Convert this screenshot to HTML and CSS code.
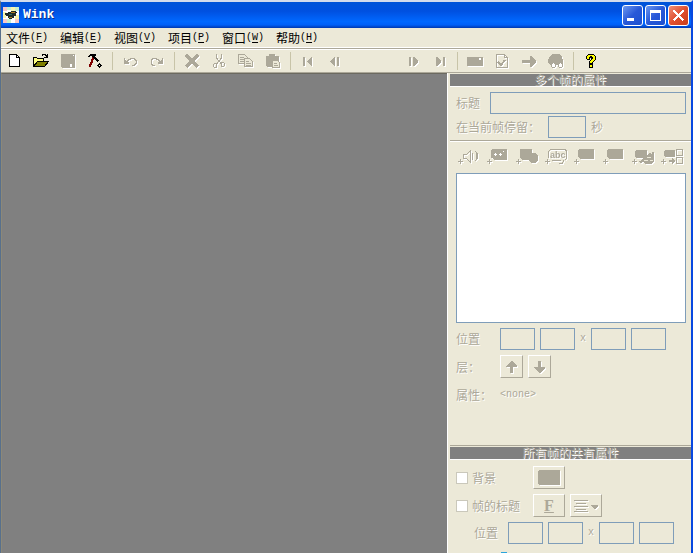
FILE: index.html
```html
<!DOCTYPE html>
<html lang="zh-CN">
<head>
<meta charset="utf-8">
<title>Wink</title>
<link rel="stylesheet" href="styles.css">
</head>
<body>
<div class="window">
  <header class="titlebar">
    <svg class="app-icon" viewBox="0 0 16 16"><path fill="#fff" d="M0 0h16v16H0z"/><path fill="#f8c8c8" d="M0 0h4v4H0zM12 12h4v4h-4zM0 12h4v4H0z"/><path fill="#c8f0d0" d="M4 0h4v3H4zM12 0h4v4h-4zM4 12h4v4H4z"/><path fill="#f8f4b0" d="M8 0h4v4H8zM0 5h3v6H0zM12 8h4v4h-4z"/><path fill="#222c28" d="M2 6h3V5h3V4h5v1h1v1h-1v3h-2v2H9v1H6v-1H5V9H3V8H2z"/><path fill="#b08020" d="M8 5h4v1H8zM6 10h3v1H6z"/><path fill="#307060" d="M6 7h3v1H6z"/></svg>
    <h1 class="app-name">Wink</h1>
    <button class="caption" aria-label="最小化"><svg viewBox="0 0 21 21"><path fill="#fff" d="M5 13h7v3H5z"/></svg></button>
    <button class="caption" aria-label="最大化"><svg viewBox="0 0 21 21"><path fill="#fff" fill-rule="evenodd" d="M5 5h11v11H5zM6 8v7h9V8z"/></svg></button>
    <button class="caption caption-close" aria-label="关闭"><svg viewBox="0 0 21 21"><path fill="none" stroke="#fff" stroke-width="2.4" d="M5.500 5.500l10 10M15.500 5.500l-10 10"/></svg></button>
  </header>

  <nav class="menubar">
    <button>文件<span>(<u>F</u>)</span></button>
    <button>编辑<span>(<u>E</u>)</span></button>
    <button>视图<span>(<u>V</u>)</span></button>
    <button>项目<span>(<u>P</u>)</span></button>
    <button>窗口<span>(<u>W</u>)</span></button>
    <button>帮助<span>(<u>H</u>)</span></button>
  </nav>

  <div class="toolbar">
    <button aria-label="新建"><svg viewBox="0 0 16 16"><path fill="#fff" stroke="#000" d="M3.500 1.500h7l3 3v9h-10z"/><path fill="none" stroke="#000" d="M10.500 1.500v3h3"/></svg></button>
    <button aria-label="打开"><svg viewBox="0 0 16 16"><path fill="#ffff80" stroke="#000" d="M.5 13.500v-9h3l1 1h6v3"/><path fill="#808000" stroke="#000" d="M.5 13.500l4-5h11l-4 5z"/><path fill="none" stroke="#000" d="M9 2.500l1-1h2l2 2M14.500 1v3.500H11"/></svg></button>
    <button disabled aria-label="保存"><svg viewBox="0 0 16 16"><path fill="#aca899" d="M1 1h14v14H2l-1-1z"/><path fill="#fff" d="M13 2h1v1h-1zM10 11h2v3h-2z"/></svg></button>
    <button aria-label="渲染"><svg viewBox="0 0 16 16"><path fill="none" stroke="#800000" stroke-width="2.200" d="M6.500 4.500L2.500 14"/><path fill="none" stroke="#000" stroke-width="1.600" d="M1.500 4l2-2.200h5M6 3l5.500 5.500"/><path fill="#000" d="M12 10h1v1h1v1h1v1h-1v1h-1v1h-1v-1h-1v-1h-1v-1h1v-1h1z"/><path fill="#fff" d="M12 12h1v1h-1z"/></svg></button>
    <hr>
    <button disabled aria-label="撤消"><svg viewBox="0 0 16 16"><path fill="#aca899" d="M2 5h1v2h1v1h1v1h2v2H2z"/><path fill="none" stroke="#aca899" d="M5 8.500l2-2h1l1-1h3l2 2v3l-2 2h-2"/></svg></button>
    <button disabled aria-label="重做"><svg viewBox="0 0 16 16"><path fill="#aca899" d="M14 5h-1v2h-1v1h-1v1H9v2h5z"/><path fill="none" stroke="#aca899" d="M11 8.500l-2-2H8l-1-1H4l-2 2v3l2 2h2"/></svg></button>
    <hr>
    <button disabled aria-label="删除"><svg viewBox="0 0 16 16"><path fill="none" stroke="#aca899" stroke-width="3" d="M2 2l12 12M14 2L2 14"/></svg></button>
    <button disabled aria-label="剪切"><svg viewBox="0 0 16 16"><g fill="none" stroke="#aca899"><path d="M5.500 1v4l5 6M10.500 1v4l-5 6"/><path d="M3.500 10.500h2v4h-2l-1-1v-2zM10.500 9.500h2l1 1v2l-1 1h-2z"/></g></svg></button>
    <button disabled aria-label="复制"><svg viewBox="0 0 16 16"><g fill="#ece9d8" stroke="#aca899"><path d="M.5 1.500h6l3 3v6h-9z"/><path d="M2 4.500h4M2 6.500h5M2 8.500h5"/><path d="M6.500 5.500h5l3 3v5h-8z"/><path d="M8 8.500h3M8 10.500h5M8 12h5"/></g></svg></button>
    <button disabled aria-label="粘贴"><svg viewBox="0 0 16 16"><path fill="#aca899" d="M1 3h3V1h6v2h4v5h-5v6H2l-1-1z"/><path fill="#ece9d8" stroke="#aca899" d="M7.500 7.500h5l2 2v5h-7z"/><path stroke="#aca899" d="M9 10.500h3M9 12.500h4"/></svg></button>
    <hr>
    <button disabled aria-label="首帧"><svg viewBox="0 0 16 16"><path fill="#aca899" d="M3 4h2v9H3zM12 4v9h-1L7 9V8l4-4z"/></svg></button>
    <button disabled aria-label="上一帧"><svg viewBox="0 0 16 16"><path fill="#aca899" d="M8 4v9H7L3 9V8l4-4zM10 4h2v9h-2z"/></svg></button>
    <span class="toolbar-gap"></span>
    <button disabled aria-label="下一帧"><svg viewBox="0 0 16 16"><path fill="#aca899" d="M4 4h2v9H4zM8 4h1l4 4v1l-4 4H8z"/></svg></button>
    <button disabled aria-label="末帧"><svg viewBox="0 0 16 16"><path fill="#aca899" d="M4 4h1l4 4v1l-4 4H4zM11 4h2v9h-2z"/></svg></button>
    <hr>
    <button disabled aria-label="帧属性"><svg viewBox="0 0 16 16"><path fill="#aca899" d="M0 4h16v9H0z"/><path fill="#fff" d="M12 5h2v2h-2z"/></svg></button>
    <button disabled aria-label="检查"><svg viewBox="0 0 16 16"><path fill="none" stroke="#aca899" d="M2.500 1.500h8l3 3v10h-11zM10.500 1.500v3h3"/><path fill="none" stroke="#aca899" stroke-width="2" d="M4 9l3 3 4-5"/></svg></button>
    <button disabled aria-label="转到"><svg viewBox="0 0 16 16"><path fill="#aca899" d="M1 7h8V3h1l5 5v1l-5 5H9v-4H1z"/></svg></button>
    <button disabled aria-label="浏览"><svg viewBox="0 0 16 16"><path fill="#aca899" d="M5 1h6l3 3 1 3v3l-2 2H2L0 9V7l2-4z"/><path fill="#fff" stroke="#aca899" d="M5.500 9.500h1l1 2v2l-1 1h-2l-1-1v-2zM11.500 9.500h1l2 2v2l-1 1h-2l-1-1v-2z"/></svg></button>
    <hr>
    <button aria-label="帮助"><svg viewBox="0 0 16 16"><path fill="#000" d="M5 1h6v1h1v1h1v4h-1v1h-1v1h-1v2H6V8h1V7h1V5H7v2H4V6H3V3h1V2h1zM6 11h4v4H6z"/><path fill="#ff0" d="M5 2h6v1h1v4h-1v1h-1v1H9v1H7V8h1V7h1V6h1V4H9V3H7v1H6v2H4V3h1zM7 12h2v2H7z"/></svg></button>
  </div>

  <div class="body">
    <main class="workspace"></main>
    <aside class="panel">
      <h2 class="panel-head"><span>多个帧的属性</span></h2>
      <section class="frame-fields">
        <div class="row">
          <label for="title">标题</label>
          <input class="grow" id="title" type="text" disabled>
        </div>
        <div class="row">
          <label for="stay">在当前帧停留：</label>
          <input class="stay" id="stay" type="text" disabled>
          <span>秒</span>
        </div>
      </section>
      <section class="objects">
        <div class="object-tools">
          <button disabled aria-label="添加声音"><svg viewBox="0 0 24 18"><path class="p" d="M0 13h2v-2h1v2h2v1H3v2H2v-2H0z"/><path class="l" d="M5.500 6.500h3l4-4v12l-4-4h-3zM14.500 5v7M17.500 3l1 2v6l-1 2M19.500 5v6"/></svg></button>
          <button disabled aria-label="添加标注"><svg viewBox="0 0 24 18"><path class="p" d="M0 13h2v-2h1v2h2v1H3v2H2v-2H0zM5 1h14l1 1v9l-1 1H7l-2-2H4V2z"/><path fill="#fff" d="M8 5h1v1h1v1H9v1H8V7H7V6h1zM13 5h1v1h1v1h-1v1h-1V7h-1V6h1zM16 3h1v1h-1z"/></svg></button>
          <button disabled aria-label="添加形状"><svg viewBox="0 0 24 18"><path class="p" d="M0 13h2v-2h1v2h2v1H3v2H2v-2H0zM4 1h12v4h3l3 3v4l-3 3h-4l-3-3H6l-2-2z"/></svg></button>
          <button disabled aria-label="添加文本"><svg viewBox="0 0 24 18"><path class="p" d="M0 13h2v-2h1v2h2v1H3v2H2v-2H0z"/><path class="l" d="M3.500 10V3.500l2-2h15l1 2v7l-2 2M7 12.500h9M14 15.500h3l2-3"/><text x="5" y="10">abc</text></svg></button>
          <button disabled aria-label="添加上一帧按钮"><svg viewBox="0 0 24 18"><path class="p" d="M0 13h2v-2h1v2h2v1H3v2H2v-2H0zM5 1h14l1 1v8l-1 1H6l-2-2V2z"/></svg></button>
          <button disabled aria-label="添加下一帧按钮"><svg viewBox="0 0 24 18"><path class="p" d="M0 13h2v-2h1v2h2v1H3v2H2v-2H0zM5 1h14l1 1v8l-1 1H6l-2-2V2z"/></svg></button>
          <button disabled aria-label="添加网址按钮"><svg viewBox="0 0 24 18"><path class="p" d="M0 13h2v-2h1v2h2v1H3v2H2v-2H0zM4 2h10l1 1v5l-2 2H4L3 8V3zM7 13l3-1 3-4 4-2V5h2v1h1V4h2v9l-3 3h-6l-2-2-3 1H8z"/><path fill="#ece9d8" d="M15 9h4v1h-4zM12 12h4v1h-4zM18 12h3v1h-3z"/></svg></button>
          <button disabled aria-label="添加跳转按钮"><svg viewBox="0 0 24 18"><path class="p" d="M0 13h2v-2h1v2h2v1H3v2H2v-2H0zM4 2h9l1 1v5l-1 1H4L3 8V3zM8 12h3v-2l3 3-3 3v-2H8z"/><path class="l" d="M15.500 1.500h6v6h-6zM15.500 9.500h6v6h-6z"/></svg></button>
        </div>
        <div class="list" role="listbox" aria-label="对象"></div>
        <div class="row">
          <span class="label">位置</span>
          <input type="text" aria-label="左" disabled>
          <input type="text" aria-label="上" disabled>
          <span class="times">x</span>
          <input type="text" aria-label="宽" disabled>
          <input type="text" aria-label="高" disabled>
        </div>
        <div class="row tall">
          <span class="label">层：</span>
          <button class="push" disabled aria-label="上移"><svg viewBox="0 0 16 16"><path class="p" d="M7 2h1l5 5v1H9v6H6V8H2V7z"/></svg></button>
          <button class="push" disabled aria-label="下移"><svg viewBox="0 0 16 16"><path class="p" d="M6 2h3v6h4v1l-5 5H7L2 9V8h4z"/></svg></button>
        </div>
        <div class="row tall">
          <span class="label">属性：</span>
          <span class="latin">&lt;none&gt;</span>
        </div>
      </section>

      <h2 class="panel-head"><span>所有帧的共有属性</span></h2>
      <section class="shared">
        <div class="row tall">
          <label class="check"><input type="checkbox" disabled>背景</label>
          <button class="push wide" disabled aria-label="背景颜色"><svg class="swatch" viewBox="0 0 22 15"><path class="p" d="M1 0h20l1 1v13l-1 1H1l-1-1V1z"/></svg></button>
        </div>
        <div class="row tall">
          <label class="check"><input type="checkbox" disabled>帧的标题</label>
          <button class="push wide font" disabled aria-label="字体"><u>F</u></button>
          <button class="push wide" disabled aria-label="对齐"><svg class="align" viewBox="0 0 26 16"><path class="l" d="M1 2.500h14M3 5.500h10M1 8.500h14M3 11.500h10M1 13.500h14"/><path class="p" d="M18 7h7v1l-3 3h-1l-3-3z"/></svg></button>
        </div>
        <div class="row indent">
          <span class="label">位置</span>
          <input type="text" aria-label="标题左" disabled>
          <input type="text" aria-label="标题上" disabled>
          <span class="times">x</span>
          <input type="text" aria-label="标题宽" disabled>
          <input type="text" aria-label="标题高" disabled>
        </div>
        <svg class="edge" viewBox="0 0 100 8"><circle cx="7" cy="8" r="8" fill="#2aa4dc"/><path fill="#a8d0f0" d="M90 1h4v7h-4z"/></svg>
      </section>
    </aside>
  </div>
</div>
</body>
</html>
```

FILE: styles.css
```css
* {
  box-sizing: border-box;
}

body {
  margin: 0;
  background: #ece9d8;
  color: #000;
  font: 12px/14px "Noto Sans CJK SC", sans-serif;
}

button {
  margin: 0;
  padding: 0;
  border: 0;
  background: none;
  color: inherit;
  font: inherit;
}

svg {
  display: block;
  shape-rendering: crispEdges;
}

.window {
  display: flex;
  flex-direction: column;
  height: 100vh;
  overflow: hidden;
  border-top: 2px solid #d4dcec;
  border-left: 1px solid #58708c;
  border-right: 2px solid #0848e0;
}

.titlebar {
  display: flex;
  align-items: center;
  gap: 2px;
  height: 26px;
  flex: none;
  padding: 0 4px 0 2px;
  margin-right: -2px;
  background: linear-gradient(#0054d8, #0050e0 35%, #0068ff 75%, #0060f8 88%, #0038b0);
}

.app-icon {
  width: 16px;
  height: 16px;
  margin-right: 2px;
}

.app-name {
  flex: 1;
  margin: 0;
  color: #fff;
  font: bold 13px/16px "Liberation Mono", monospace;
  text-shadow: 1px 1px 0 #0a2f90;
}

.caption {
  width: 21px;
  height: 21px;
  border: 1px solid #fff;
  border-radius: 3px;
  background: linear-gradient(135deg, #6c98f0, #2858d8 50%, #1c50d0);
}

.caption svg {
  width: 21px;
  height: 21px;
  margin: -1px;
}

.caption-close {
  background: linear-gradient(135deg, #f09078, #e05030 50%, #c83c18);
}

.menubar {
  display: flex;
  gap: 12px;
  height: 22px;
  flex: none;
  padding: 3px 5px;
  border-bottom: 1px solid #fff;
  box-shadow: inset 0 -1px 0 #aca899, inset 0 -2px 0 #fff;
}

.menubar button {
  display: flex;
  align-items: center;
  width: 42px;
  height: 14px;
  white-space: nowrap;
}

.menubar span {
  font: 10px/14px "Liberation Mono", monospace;
}

.menubar u {
  text-underline-offset: 2px;
}

.toolbar {
  display: flex;
  align-items: center;
  height: 23px;
  flex: none;
  border-bottom: 1px solid #aca899;
}

.toolbar button {
  width: 27px;
  flex: none;
  padding-left: 5px;
}

.toolbar svg {
  width: 16px;
  height: 16px;
}

button:disabled svg {
  filter: drop-shadow(1px 1px 0 #fff);
}

.toolbar hr {
  width: 1px;
  height: 18px;
  margin: 0 4px 0 3px;
  border: 0;
  background: #c8c4a8;
}

.toolbar-gap {
  width: 51px;
}

.body {
  display: flex;
  flex: 1;
  min-height: 0;
}

.workspace {
  flex: 1;
  border-top: 1px solid #6c6a60;
  border-left: 1px solid #8c8878;
  background: #808080;
}

.panel {
  width: 244px;
  flex: none;
  padding-left: 2px;
  border-left: 1px solid #fff;
  color: #aca899;
  text-shadow: 1px 1px 0 #fff;
}

.panel-head {
  margin: 0;
  padding-top: 1px;
  border-bottom: 1px solid #fff;
  font: 12px/12px "Noto Sans CJK SC", sans-serif;
  text-align: center;
}

.panel-head span {
  display: block;
  height: 12px;
  background: #808080;
}

.objects + .panel-head {
  border-top: 1px solid #aca899;
}

.row {
  display: flex;
  align-items: center;
  gap: 5px;
  height: 22px;
}

.row.tall {
  height: 23px;
}

.row input[type="text"] {
  width: 35px;
  height: 22px;
  padding: 0 2px;
  border: 1px solid #7f9db9;
  border-radius: 0;
  background: #ece9d8;
  font: inherit;
}

.row .grow {
  flex: 1;
}

.row input.stay[type="text"] {
  width: 38px;
}

.frame-fields {
  display: grid;
  gap: 2px;
  padding: 5px 5px 2px 6px;
  border-bottom: 1px solid #aca899;
}

.frame-fields label[for="title"] {
  width: 29px;
}

.frame-fields label[for="stay"] {
  width: 87px;
}

.objects {
  display: grid;
  gap: 5px;
  padding: 6px 5px 39px 6px;
  border-top: 1px solid #fff;
}

.object-tools {
  display: flex;
  gap: 5px;
  padding-left: 2px;
}

.object-tools svg {
  width: 24px;
  height: 18px;
}

.object-tools text {
  fill: #aca899;
  font: bold 9px "Liberation Sans", sans-serif;
  text-shadow: none;
}

.p {
  fill: #aca899;
}

.l {
  fill: none;
  stroke: #aca899;
}

.list {
  height: 150px;
  margin-top: 2px;
  border: 1px solid #7f9db9;
  background: #fff;
}

.label {
  width: 39px;
}

.times,
.latin {
  font: 10px/14px "Liberation Mono", monospace;
}

.times {
  width: 6px;
}

.push {
  display: flex;
  align-items: center;
  justify-content: center;
  width: 23px;
  height: 23px;
  border: 1px solid;
  border-color: #fff #aca899 #aca899 #fff;
}

.push svg {
  width: 16px;
  height: 16px;
}

.push.wide {
  width: 32px;
}

.push .swatch {
  width: 22px;
  height: 15px;
}

.push .align {
  width: 26px;
}

.push.font {
  font: bold 16px/20px "Liberation Serif", serif;
}

.shared {
  display: grid;
  gap: 5px;
  padding: 6px 5px 0 6px;
}

.check {
  display: flex;
  align-items: center;
  gap: 4px;
  width: 72px;
}

.check input {
  appearance: none;
  width: 12px;
  height: 12px;
  margin: 0;
  border: 1px solid #cac8bb;
  background: #fff;
}

.indent {
  padding-left: 18px;
}

.indent .label {
  width: 29px;
}

.edge {
  width: 100px;
  height: 8px;
  margin: 3px 0 0 41px;
}
```
